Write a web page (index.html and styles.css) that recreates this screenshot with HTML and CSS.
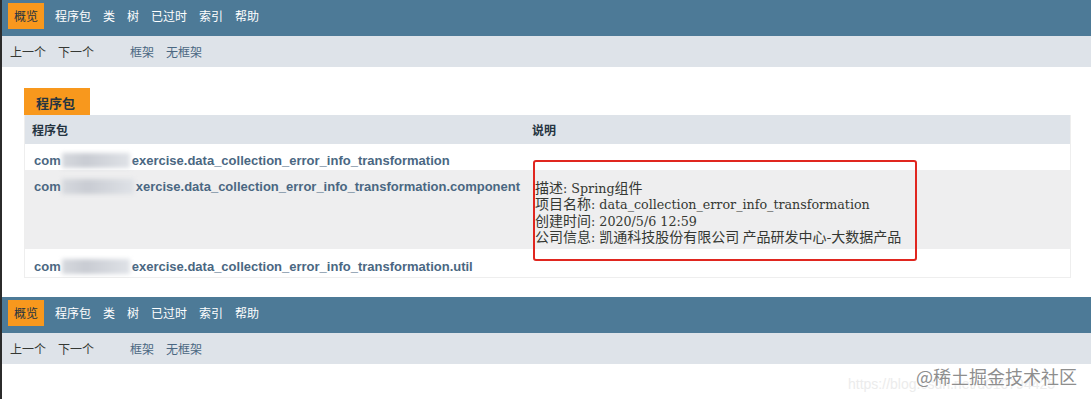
FILE: index.html
```html
<!DOCTYPE html>
<html lang="zh">
<head>
<meta charset="utf-8">
<title>概览</title>
<link rel="stylesheet" href="styles.css">
</head>
<body>
<div class="frame">
  <div class="topnav">
    <ul class="navlist">
      <li class="active">概览</li>
      <li>程序包</li>
      <li>类</li>
      <li>树</li>
      <li>已过时</li>
      <li>索引</li>
      <li>帮助</li>
    </ul>
  </div>
  <div class="subnav">
    <span class="sub-item">上一个</span>
    <span class="sub-item">下一个</span>
    <span class="sub-link first-link">框架</span>
    <span class="sub-link">无框架</span>
  </div>

  <div class="content">
    <div class="caption">程序包</div>
    <table class="summary">
      <thead>
        <tr><th class="col-first">程序包</th><th class="col-last">说明</th></tr>
      </thead>
      <tbody>
        <tr class="row-white">
          <td class="col-first"><span class="pkg">com<span class="blur blur-a"></span>exercise.data_collection_error_info_transformation</span></td>
          <td class="col-last"></td>
        </tr>
        <tr class="row-gray">
          <td class="col-first"><span class="pkg">com<span class="blur blur-b"></span>xercise.data_collection_error_info_transformation.component</span></td>
          <td class="col-last">
            <div class="desc">
              <div class="desc-line">描述<span class="lat">: Spring</span>组件</div>
              <div class="desc-line">项目名称<span class="lat">: data_collection_error_info_transformation</span></div>
              <div class="desc-line">创建时间<span class="lat">: 2020/5/6 12:59</span></div>
              <div class="desc-line">公司信息<span class="lat">: </span>凯通科技股份有限公司 产品研发中心-大数据产品</div>
            </div>
          </td>
        </tr>
        <tr class="row-white">
          <td class="col-first"><span class="pkg">com<span class="blur blur-c"></span>exercise.data_collection_error_info_transformation.util</span></td>
          <td class="col-last"></td>
        </tr>
      </tbody>
    </table>
  </div>

  <div class="topnav">
    <ul class="navlist">
      <li class="active">概览</li>
      <li>程序包</li>
      <li>类</li>
      <li>树</li>
      <li>已过时</li>
      <li>索引</li>
      <li>帮助</li>
    </ul>
  </div>
  <div class="subnav">
    <span class="sub-item">上一个</span>
    <span class="sub-item">下一个</span>
    <span class="sub-link first-link">框架</span>
    <span class="sub-link">无框架</span>
  </div>
</div>

<div class="annotation"></div>
<div class="watermark">
  <span class="wm-url">https://blog.csdn.net/u010794425</span>
  <span class="wm-brand">@稀土掘金技术社区</span>
</div>
</body>
</html>
```

FILE: styles.css
```css
html, body {
  margin: 0;
  padding: 0;
  background: #ffffff;
}

body {
  font-family: "Liberation Sans", "Noto Sans CJK SC", Arial, sans-serif;
  position: relative;
  width: 1091px;
  height: 399px;
  overflow: hidden;
}

.frame {
  border-left: 2px solid #2b2b2b;
  min-height: 399px;
  box-sizing: border-box;
}

.topnav {
  background: #4d7a97;
  height: 36px;
  padding: 3px 0 0 6px;
  box-sizing: border-box;
}

.navlist {
  list-style: none;
  margin: 0;
  padding: 0;
  display: flex;
}

.navlist li {
  font-family: "Noto Sans CJK SC", sans-serif;
  font-size: 12px;
  line-height: 16px;
  padding: 5px 6px;
  color: #ffffff;
}

.navlist li.active {
  background: #f8981d;
  color: #253441;
  margin-right: 5px;
}

.subnav {
  background: #dee3e9;
  height: 31px;
  display: flex;
  align-items: center;
  padding-left: 8px;
  font-family: "Noto Sans CJK SC", sans-serif;
  font-size: 12px;
}

.sub-item {
  color: #353833;
  margin-right: 12px;
}

.sub-link {
  color: #4a6782;
  margin-right: 12px;
}

.first-link {
  margin-left: 24px;
}

.content {
  padding: 21px 20px 19px 22px;
}

.caption {
  display: block;
  background: #f8981d;
  color: #253441;
  font-family: "Noto Sans CJK SC", sans-serif;
  font-weight: bold;
  font-size: 13px;
  line-height: 17px;
  height: 27px;
  box-sizing: border-box;
  padding: 6px 12px 4px 12px;
  width: 66px;
}

.summary {
  width: 100%;
  border-collapse: collapse;
  border: 1px solid #eeeeee;
  border-top: none;
}

.summary th {
  background: #dee3e9;
  text-align: left;
  font-family: "Noto Sans CJK SC", sans-serif;
  font-weight: bold;
  font-size: 12px;
  color: #253441;
  height: 29px;
  padding: 0 7px;
}

.summary th.col-first {
  width: 486px;
}

.summary td {
  vertical-align: top;
  padding: 0;
}

.row-white {
  background: #ffffff;
}

.row-gray {
  background: #eeeeef;
}

.row-white td.col-first {
  height: 26px;
  padding-top: 7px;
  box-sizing: border-box;
}

.row-white:last-child td.col-first {
  height: 28px;
  padding-top: 8px;
}

.row-gray td.col-first {
  height: 78px;
  padding-top: 7px;
  box-sizing: border-box;
}

.pkg {
  font-family: "Liberation Sans", Arial, sans-serif;
  font-weight: bold;
  font-size: 13px;
  color: #4a6782;
  padding-left: 9px;
  white-space: nowrap;
  display: inline-flex;
  align-items: center;
  line-height: 15px;
}

.blur {
  display: inline-block;
  height: 15px;
  background: linear-gradient(90deg, #d6d9de 0%, #c9ccd3 35%, #d3d6dc 65%, #dfe2e7 100%);
  filter: blur(2px);
  margin: 0 2px 0 1px;
}

.blur-a { width: 68px; }
.blur-b { width: 72px; }
.blur-c { width: 68px; }

.desc {
  font-family: "Noto Sans CJK SC", sans-serif;
  font-size: 14px;
  color: #353833;
  height: 70px;
  padding: 9px 0 0 10px;
  white-space: nowrap;
}

.desc-line {
  height: 16.4px;
  line-height: 16.4px;
}

.lat {
  font-family: "DejaVu Serif", "Liberation Serif", serif;
  font-size: 12.7px;
  line-height: 14px;
}

.annotation {
  position: absolute;
  left: 533px;
  top: 160px;
  width: 384px;
  height: 101px;
  border: 2px solid #e0261f;
  border-radius: 3px;
  box-sizing: border-box;
}

.watermark {
  position: absolute;
  left: 848px;
  top: 363px;
  width: 240px;
  height: 30px;
}

.wm-url {
  position: absolute;
  left: 0;
  top: 13px;
  font-family: "Liberation Sans", Arial, sans-serif;
  font-size: 14px;
  color: #ececec;
  white-space: nowrap;
}

.wm-brand {
  position: absolute;
  left: 68px;
  top: 0;
  font-family: "Noto Sans CJK SC", sans-serif;
  font-size: 18px;
  color: #8e8e8e;
  white-space: nowrap;
  text-shadow: 0 0 2px #ffffff, 0 0 2px #ffffff;
}
```
